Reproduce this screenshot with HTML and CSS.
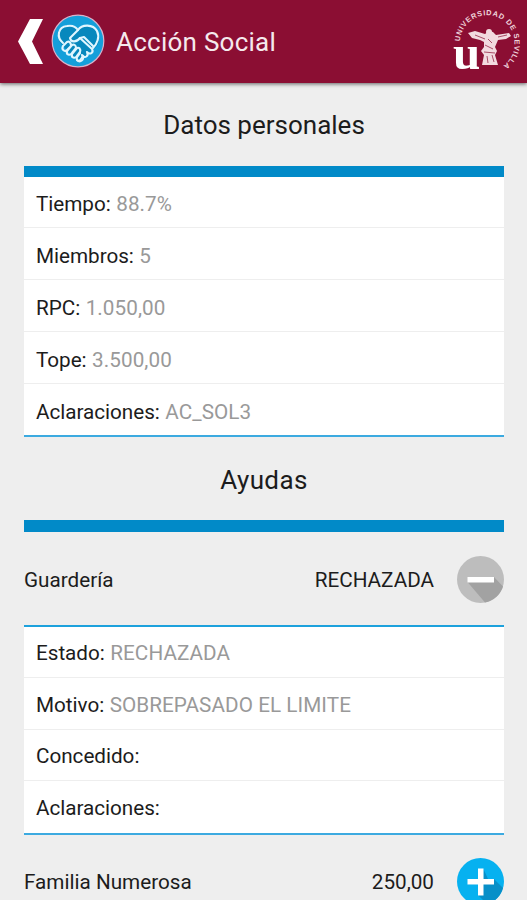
FILE: index.html
```html
<!DOCTYPE html>
<html lang="es">
<head>
<meta charset="utf-8">
<title>Acción Social</title>
<link rel="stylesheet" href="styles.css">
</head>
<body>
<header class="bar">
  <svg class="back" viewBox="0 0 26 46"><path d="M12 0H25L14 22.500L25 45H12L0 22.500Z" fill="#fff"/></svg>
  <svg class="badge" viewBox="0 0 54 54">
    <circle cx="27" cy="27" r="25.800" fill="#149fda" stroke="#d8b4cc" stroke-width="1.200"/>
    <path d="M27 15C21 7 7 11 7 22C7 26 9 29 12 32L28 48L45 33C51 27 49 12 37 12C32 12 29 14 27 15Z" fill="#0788bd"/>
    <g fill="none" stroke="#e0f6ff" stroke-width="2.100" stroke-linecap="round" stroke-linejoin="round">
      <path d="M12 29C5 23 7 13 16 12C21 11 25 13 27 16C31 10 42 10 46 17C49 23 46 30 42 34"/>
      <path d="M27 16L19 24C20 29 26 28 29 24L33 23L42 32"/>
      <path d="M29 24L41 35C43 39 39 41 36 38M36 38C38 42 34 45 31 41M31 41C34 46 29 49 26 46"/>
      <path d="M16 28L12 32C10 36 14 38 16 36L20 32C20 28 18 27 16 28ZM21 31L16 37C15 41 19 42 21 39L25 34C25 31 23 30 21 31ZM26 34L21 40C20 44 24 45 26 42L29 38C30 35 28 33 26 34ZM29 39L26 43C25 47 28 48 30 45L32 42"/>
    </g>
  </svg>
  <h1 class="title">Acción Social</h1>
  <svg class="seal" viewBox="0 0 77 70">
    <path id="ring" d="M10 36.500A27.300 27.300 0 0 1 64.600 38.500A27.300 27.300 0 0 1 37.300 65.800" fill="none"/>
    <text class="seal-ring"><textPath href="#ring">UNIVERSIDAD DE SEVILLA</textPath></text>
    <text class="seal-u" x="3" y="64">u</text>
    <g fill="#f2d9df">
      <path d="M18 28L25 26L35 29L39 26L43 27L46 30L59 28L61 31L56 34L48 35L45 42L47 46L45 50L48 60L32 60L34 50L31 46L34 42L34 37L30 35L22 33Z"/>
      <circle cx="39" cy="27" r="3"/>
    </g>
    <g fill="none" stroke="#a94c67" stroke-width="1"><path d="M35 40L43 44M34 47L45 48M37 51L38 58M42 50L44 57M25 30L35 34M48 32L57 30M38 34L42 38"/></g>
  </svg>
</header>
<main class="page">
  <h2 class="heading">Datos personales</h2>
  <dl class="card thick">
    <div class="row"><dt>Tiempo:</dt><dd>88.7%</dd></div>
    <div class="row"><dt>Miembros:</dt><dd>5</dd></div>
    <div class="row"><dt>RPC:</dt><dd>1.050,00</dd></div>
    <div class="row"><dt>Tope:</dt><dd>3.500,00</dd></div>
    <div class="row"><dt>Aclaraciones:</dt><dd>AC_SOL3</dd></div>
  </dl>
  <h2 class="heading second">Ayudas</h2>
  <div class="rule"></div>
  <div class="aid first">
    <span class="name">Guardería</span><span class="value">RECHAZADA</span>
    <svg class="toggle" viewBox="0 0 47 47"><circle cx="23.500" cy="23.500" r="23.500" fill="#bdbdbd"/><path d="M10.500 26L28 46.600A23.500 23.500 0 0 0 46 30.500L37 21Z" fill="#a2a2a2"/><path d="M10.500 21H37V26.500H10.500Z" fill="#fff"/></svg>
  </div>
  <dl class="card detail">
    <div class="row"><dt>Estado:</dt><dd>RECHAZADA</dd></div>
    <div class="row"><dt>Motivo:</dt><dd>SOBREPASADO EL LIMITE</dd></div>
    <div class="row"><dt>Concedido:</dt></div>
    <div class="row"><dt>Aclaraciones:</dt></div>
  </dl>
  <div class="aid">
    <span class="name">Familia Numerosa</span><span class="value">250,00</span>
    <svg class="toggle" viewBox="0 0 47 47"><circle cx="23.500" cy="23.500" r="23.500" fill="#06b1f0"/><path d="M10.500 26.500L21 26V37L30 46A23.500 23.500 0 0 0 46 30L37 21L31 21L26.500 11L26.500 21Z" fill="#078fc8"/><path d="M21 10.500H26.500V21H37V26.500H26.500V37.500H21V26.500H10.500V21H21Z" fill="#fff"/></svg>
  </div>
</main>
</body>
</html>
```
FILE: styles.css
```css
* { box-sizing: border-box; }
html { overflow: hidden; }
body { margin: 0; height: 900px; overflow: hidden; background: #eee; color: #1c1c1c; font-family: Roboto, sans-serif; }
.bar { height: 83px; background: #8b0e33; box-shadow: 0 1px 4px rgba(0,0,0,.6); display: flex; align-items: center; padding-left: 18px; }
.back { width: 26px; height: 46px; }
.badge { width: 54px; height: 54px; margin-left: 7px; margin-top: -2px; }
.title { margin: 0 auto 0 11px; color: #f5e9ed; font-size: 26px; letter-spacing: .25px; font-weight: 400; line-height: 36px; }
.seal { width: 77px; height: 70px; margin-top: -3px; overflow: visible; }
.seal-ring { font: 700 7.400px "Liberation Sans", sans-serif; letter-spacing: .7px; fill: #efd3db; }
.seal-u { font: 700 49px "Liberation Serif", serif; fill: #fff; }
.page { padding: 0 23px 0 24px; }
.heading { margin: 0; height: 82.500px; padding-top: 1px; font-size: 26px; font-weight: 400; line-height: 82px; text-align: center; }
.second { padding-top: 2px; letter-spacing: .4px; }
.card { margin: 0; background: #fff; border-top: 2px solid #1da1dc; border-bottom: 2px solid #3caae0; }
.thick { border-top: 11px solid #018ac8; }
.row { display: flex; align-items: center; gap: 5.500px; height: 51.750px; padding: 5px 12px 0; font-size: 20.700px; border-bottom: 1px solid #eee; }
.row:last-child { border-bottom: 0; }
.detail .row { height: 51.500px; padding-top: 2.500px; }
dt { letter-spacing: -.03px; }
dd { margin: 0; color: #999; letter-spacing: .06px; }
.rule { height: 12px; background: #018ac8; }
.aid { height: 93px; display: flex; align-items: center; font-size: 20.700px; }
.aid span { padding-top: 1.500px; }
.first { padding-top: 2px; }
.value { margin-left: auto; margin-right: 23px; }
.toggle { width: 47px; height: 47px; }
```
